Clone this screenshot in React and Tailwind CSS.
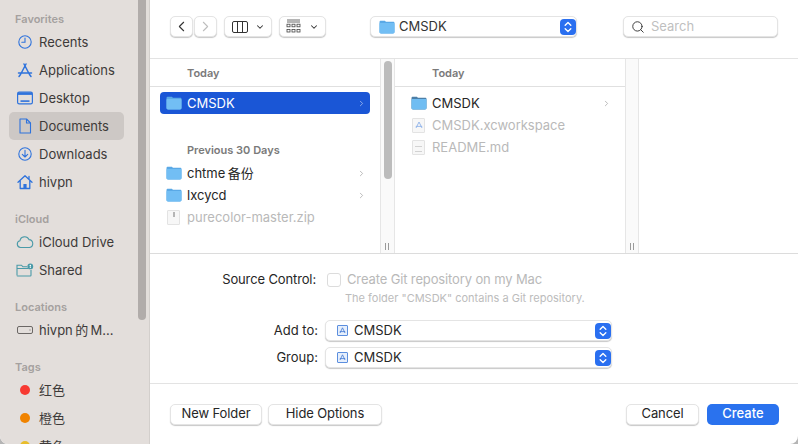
import { ChevronLeft, ChevronRight, ChevronDown, Search } from "lucide-react";

const font = "font-['Inter','Noto_Sans_CJK_SC',sans-serif]";

function Clock() {
  return (
    <svg width="16" height="16" viewBox="0 0 16 16" fill="none" stroke="#2f73dc" strokeWidth="1.1">
      <circle cx="8" cy="8" r="6.2" />
      <path d="M8 4v4.3H4.8" strokeLinecap="round" />
    </svg>
  );
}

function AppsIcon() {
  return (
    <svg width="18" height="18" viewBox="0 0 18 18" fill="none" stroke="#2f73dc" strokeWidth="1.5" strokeLinecap="round">
      <path d="M8 3l5.5 10.5M10 3L4.5 13.5M2.5 12h13M3 15.5l1.5-2M15 15.5l-1.5-2" />
    </svg>
  );
}

function DesktopIcon() {
  return (
    <svg width="16" height="14" viewBox="0 0 16 14" fill="none">
      <rect x="0.6" y="1.1" width="14.8" height="11.8" rx="1.6" stroke="#2f73dc" strokeWidth="1.2" />
      <rect x="1" y="1.5" width="14" height="2.4" fill="#2f73dc" />
      <rect x="3.5" y="9.3" width="9" height="1.6" fill="#2f73dc" />
    </svg>
  );
}

function DocIcon() {
  return (
    <svg width="14" height="16" viewBox="0 0 14 16" fill="none" stroke="#2f73dc" strokeWidth="1.1" strokeLinejoin="round">
      <path d="M2 1h6.5L12.5 5v10H2z" />
      <path d="M8.5 1v4h4" />
    </svg>
  );
}

function DownloadIcon() {
  return (
    <svg width="16" height="16" viewBox="0 0 16 16" fill="none" stroke="#2f73dc" strokeWidth="1.1" strokeLinecap="round" strokeLinejoin="round">
      <circle cx="8" cy="8" r="6.2" />
      <path d="M8 4.3v6.6M5.3 8.3L8 11l2.7-2.7" />
    </svg>
  );
}

function HomeIcon() {
  return (
    <svg width="16" height="16" viewBox="0 0 16 16" fill="none" stroke="#2f73dc" strokeWidth="1.3" strokeLinejoin="round" strokeLinecap="round">
      <path d="M1 8.2L8 1.8l7 6.4M3.2 6.8V14.5h9.6V6.8M12 2.5v2.5" />
      <path d="M6.4 14.5V10h3.2v4.5" fill="#2f73dc" stroke="none" />
    </svg>
  );
}

function CloudIcon() {
  return (
    <svg width="18" height="14" viewBox="0 0 18 14" fill="none" stroke="#4a9aa8" strokeWidth="1.1">
      <path d="M4.5 12.5a3.4 3.4 0 0 1-.6-6.7A4.8 4.8 0 0 1 13 4.6a4 4 0 0 1 .6 7.9z" />
    </svg>
  );
}

function SharedIcon() {
  return (
    <svg width="18" height="14" viewBox="0 0 18 14" fill="none" stroke="#4a9aa8" strokeWidth="1.1">
      <path d="M1 12V2.2h4.5l1.4 1.6H11M1 5.5h11M15 7v5.2a.8.8 0 0 1-.8.8H1.8a.8.8 0 0 1-.8-.8" />
      <circle cx="14.3" cy="3.4" r="2.9" fill="#4a9aa8" stroke="none" />
      <circle cx="14.3" cy="2.6" r="0.8" fill="#fff" stroke="none" />
      <path d="M14.3 3.6v1.4" stroke="#fff" strokeWidth="1" />
    </svg>
  );
}

function DriveIcon() {
  return (
    <svg width="16" height="8" viewBox="0 0 16 8" fill="none" stroke="#6b6765" strokeWidth="1">
      <rect x="0.5" y="0.5" width="15" height="7" rx="1.5" />
      <path d="M12.5 4h1" />
    </svg>
  );
}

function Folder({ dark }) {
  return (
    <svg width="16" height="14" viewBox="0 0 16 14" className="shrink-0">
      <path d="M0.5 2.2C0.5 1.3 1.1.8 2 .8h3.4c.7 0 1 .6 1.6 1h7c1 0 1.5.5 1.5 1.4V12c0 .9-.6 1.4-1.5 1.4H2c-.9 0-1.5-.5-1.5-1.4z" fill={dark ? "#4c7fa8" : "#5aa9e6"} />
      <path d="M.5 4c0-.6.4-1 1-1h13c.6 0 1 .4 1 1v8c0 .9-.6 1.4-1.5 1.4H2c-.9 0-1.5-.5-1.5-1.4z" fill={dark ? "#70bdf2" : "#72bef4"} />
    </svg>
  );
}

function XcodeMini() {
  return (
    <span className="flex h-[11px] w-[11px] items-center justify-center rounded-[1px] border border-[#5b8ede] bg-[#e6effc]">
      <svg width="7" height="7" viewBox="0 0 7 7" fill="none" stroke="#3f76d2" strokeWidth="0.8">
        <path d="M3.5.8L6 6M3.5.8L1 6M.8 4.6h5.4" />
      </svg>
    </span>
  );
}

function Stepper() {
  return (
    <span className="flex h-[16px] w-[16px] items-center justify-center rounded-[4px] bg-[#2a6ff0]">
      <svg width="8" height="12" viewBox="0 0 8 12" fill="none" stroke="#fff" strokeWidth="1.4" strokeLinecap="round" strokeLinejoin="round">
        <path d="M1.2 4.2L4 1.6l2.8 2.6M1.2 7.8L4 10.4l2.8-2.6" />
      </svg>
    </span>
  );
}

function SideRow({ icon, label, active }) {
  return (
    <div className={`mx-[9px] flex h-[28px] w-[115px] items-center rounded-[5px] ${active ? "bg-[#cdc8c5]" : ""}`}>
      <span className="flex w-[30px] shrink-0 items-center justify-center pl-[1px]">{icon}</span>
      <span className="text-[13px] leading-[28px] whitespace-nowrap text-[#3d3a39]">{label}</span>
    </div>
  );
}

function SideHead({ children, className }) {
  return <div className={`pl-[15px] text-[11px] leading-[14px] font-semibold text-[#a5a19f] ${className}`}>{children}</div>;
}

function Dot({ color }) {
  return <span className={`h-[10px] w-[10px] rounded-full ${color}`} />;
}

function Sidebar() {
  return (
    <aside className="relative h-[444px] w-[150px] shrink-0 overflow-hidden border-r border-[#d3cfcc] bg-[#e3dedb] pt-[12px]">
      <SideHead>Favorites</SideHead>
      <div className="mt-[2px]">
        <SideRow icon={<Clock />} label="Recents" />
        <SideRow icon={<AppsIcon />} label="Applications" />
        <SideRow icon={<DesktopIcon />} label="Desktop" />
        <SideRow icon={<DocIcon />} label="Documents" active />
        <SideRow icon={<DownloadIcon />} label="Downloads" />
        <SideRow icon={<HomeIcon />} label="hivpn" />
      </div>
      <SideHead className="mt-[16px]">iCloud</SideHead>
      <div className="mt-[2px]">
        <SideRow icon={<CloudIcon />} label="iCloud Drive" />
        <SideRow icon={<SharedIcon />} label="Shared" />
      </div>
      <SideHead className="mt-[16px]">Locations</SideHead>
      <div className="mt-[2px]">
        <SideRow icon={<DriveIcon />} label={"hivpn\u2009的\u2009M..."} />
      </div>
      <SideHead className="mt-[16px]">Tags</SideHead>
      <div className="mt-[2px]">
        <SideRow icon={<Dot color="bg-[#f73a32]" />} label="红色" />
        <SideRow icon={<Dot color="bg-[#f08300]" />} label="橙色" />
        <SideRow icon={<Dot color="bg-[#e8bd2c]" />} label="黄色" />
      </div>
      {/* scrollbar thumb */}
      <div className="absolute top-0 left-[138px] h-[320px] w-[8px] rounded-b-[4px] bg-[#b1acaa]" />
    </aside>
  );
}

const btn = "flex items-center justify-center rounded-[5px] border border-[#e4e4e4] bg-white shadow-[0_1px_1px_rgba(0,0,0,0.22)]";

function ViewColumnsIcon() {
  return (
    <svg width="16" height="12" viewBox="0 0 16 12" fill="none" stroke="#333" strokeWidth="1">
      <rect x="0.5" y="0.5" width="15" height="11" rx="1.5" />
      <path d="M5.5.5v11M10.5.5v11" />
    </svg>
  );
}

function GridIcon() {
  return (
    <svg width="15" height="15" viewBox="0 0 15 15" fill="none" stroke="#444" strokeWidth="0.8">
      <path d="M1 1h13M1 3h13" />
      <rect x="1" y="5.2" width="3" height="2.6" />
      <rect x="6" y="5.2" width="3" height="2.6" />
      <rect x="11" y="5.2" width="3" height="2.6" />
      <rect x="1" y="10.4" width="3" height="2.6" />
      <rect x="6" y="10.4" width="3" height="2.6" />
      <rect x="11" y="10.4" width="3" height="2.6" />
    </svg>
  );
}

function Toolbar() {
  return (
    <div className="flex h-[59px] shrink-0 items-start border-b border-[#e3e3e3] pt-[16px] pr-[19px] pl-[20px]">
      <div className={`${btn} h-[21px] w-[23px]`}>
        <ChevronLeft size={17} strokeWidth={1.5} className="text-[#333]" />
      </div>
      <div className={`${btn} ml-[1px] h-[21px] w-[23px]`}>
        <ChevronRight size={17} strokeWidth={1.5} className="text-[#bdbdbd]" />
      </div>
      <div className={`${btn} ml-[7px] h-[21px] w-[48px] gap-[7px]`}>
        <ViewColumnsIcon />
        <ChevronDown size={10} strokeWidth={2.5} className="text-[#333]" />
      </div>
      <div className={`${btn} ml-[7px] h-[21px] w-[47px] gap-[8px]`}>
        <GridIcon />
        <ChevronDown size={10} strokeWidth={2.5} className="text-[#333]" />
      </div>
      <div className={`${btn} ml-[44px] h-[21px] w-[207px] justify-start! pl-[8px]`}>
        <Folder />
        <span className="ml-[4px] flex-1 text-[13px] text-[#333]">CMSDK</span>
        <Stepper />
      </div>
      <div className={`${btn} ml-[46px] h-[21px] w-[155px] justify-start! pl-[7px]`}>
        <Search size={14} strokeWidth={1.6} className="text-[#333]" />
        <span className="ml-[6px] text-[13px] text-[#bfbfbf]">Search</span>
      </div>
    </div>
  );
}

function ColHead({ title, className }) {
  return <div className={`pl-[37px] text-[11px] leading-[14px] font-semibold text-[#7a7a7a] ${className}`}>{title}</div>;
}

function FileRow({ icon, name, chevron, active, dim }) {
  return (
    <div className={`mx-[10px] flex h-[22px] items-center rounded-[4px] ${active ? "bg-[#1a56d6]" : ""}`}>
      <span className="flex w-[27px] shrink-0 items-center justify-center">{icon}</span>
      <span className={`flex-1 text-[13px] leading-[22px] whitespace-nowrap ${active ? "text-white" : dim ? "text-[#b9b9b9]" : "text-[#262626]"}`}>{name}</span>
      {chevron && <ChevronRight size={9} strokeWidth={2} className={`mr-[4px] ${active ? "text-[#a9c2f0]" : "text-[#a5a5a5]"}`} />}
    </div>
  );
}

function DocFile({ zip, xc }) {
  return (
    <span className="relative flex h-[15px] w-[13px] items-center justify-center rounded-[1px] border border-[#e3e3e3] bg-[#f7f7f7]">
      {zip && <span className="absolute top-[1px] h-[5px] w-[2px] bg-[#b5b5b5]" />}
      {xc && (
        <svg width="8" height="8" viewBox="0 0 8 8" fill="none" stroke="#8fb2ea" strokeWidth="0.9">
          <path d="M4 1l3 6M4 1L1 7M.8 5.4h6.4" />
        </svg>
      )}
      {!zip && !xc && <span className="mt-[3px] h-[6px] w-[7px] border-y border-[#d2d2d2]" />}
    </span>
  );
}

function Splitter({ thumb, className }) {
  return (
    <div className={`relative shrink-0 border-x border-[#e6e6e6] bg-[#fafafa] ${className}`}>
      {thumb && <div className="absolute top-[2px] left-[3px] h-[118px] w-[8px] rounded-[4px] bg-[#bcbcbc]" />}
      <span className="absolute bottom-[3px] left-[4px] h-[7px] w-[4px] border-x border-[#9b9b9b]" />
    </div>
  );
}

function Columns() {
  return (
    <div className="flex h-[195px] shrink-0 border-b border-[#dcdcdc]">
      <div className="w-[230px] shrink-0">
        <div className="flex h-[28px] items-center border-b border-[#e0e0e0]">
          <ColHead title="Today" />
        </div>
        <div className="mt-[5px]">
          <FileRow icon={<Folder />} name="CMSDK" chevron active />
        </div>
        <ColHead title="Previous 30 Days" className="mt-[29px] mb-[5px]" />
        <FileRow icon={<Folder />} name={"chtme\u2009备份"} chevron />
        <FileRow icon={<Folder />} name="lxcycd" chevron />
        <FileRow icon={<DocFile zip />} name="purecolor-master.zip" dim />
      </div>
      <Splitter thumb className="w-[15px]" />
      <div className="w-[230px] shrink-0">
        <div className="flex h-[28px] items-center border-b border-[#e0e0e0]">
          <ColHead title="Today" />
        </div>
        <div className="mt-[5px]">
          <FileRow icon={<Folder dark />} name="CMSDK" chevron />
          <FileRow icon={<DocFile xc />} name="CMSDK.xcworkspace" dim />
          <FileRow icon={<DocFile />} name="README.md" dim />
        </div>
      </div>
      <Splitter className="w-[14px]" />
      <div className="flex-1" />
    </div>
  );
}

function SelectRow({ label }) {
  return (
    <div className="flex h-[27px] items-center">
      <span className="w-[168px] text-right text-[13px] text-[#262626]">{label}</span>
      <div className={`${btn} ml-[7px] h-[21px] w-[287px] justify-start! pl-[11px]`}>
        <XcodeMini />
        <span className="ml-[6px] flex-1 text-[13px] text-[#262626]">CMSDK</span>
        <Stepper />
      </div>
    </div>
  );
}

function Options() {
  return (
    <div className="h-[130px] shrink-0 border-b border-[#e3e3e3] pt-[17px]">
      <div className="flex h-[18px] items-center">
        <span className="w-[166px] text-right text-[13px] tracking-[-0.13px] text-[#262626]">Source Control:</span>
        <span className="ml-[11px] h-[14px] w-[14px] rounded-[3px] border border-[#dcdcdc] bg-white" />
        <span className="ml-[6px] text-[13px] tracking-[-0.13px] text-[#b9b9b9]">Create Git repository on my Mac</span>
      </div>
      <div className="mt-[1px] pl-[195px] text-[11px] leading-[16px] text-[#bcbcbc]">The folder "CMSDK" contains a Git repository.</div>
      <div className="mt-[11px]">
        <SelectRow label="Add to:" />
        <SelectRow label="Group:" />
      </div>
    </div>
  );
}

function Footer() {
  return (
    <div className="flex flex-1 items-center justify-between pr-[19px] pl-[20px]">
      <div className="flex gap-[6px]">
        <div className={`${btn} h-[21px] w-[92px] text-[13px] tracking-[-0.1px] text-[#262626]`}>New Folder</div>
        <div className={`${btn} h-[21px] w-[114px] text-[13px] tracking-[-0.1px] text-[#262626]`}>Hide Options</div>
      </div>
      <div className="flex gap-[8px]">
        <div className={`${btn} h-[21px] w-[73px] text-[13px] tracking-[-0.1px] text-[#262626]`}>Cancel</div>
        <div className="flex h-[21px] w-[72px] items-center justify-center rounded-[5px] bg-[#2a72ee] text-[13px] font-medium text-white">Create</div>
      </div>
    </div>
  );
}

export default function App() {
  return (
    <div className="h-[444px] w-[798px] bg-[#b5b5b5]">
      <div className={`flex h-[444px] w-[798px] overflow-hidden rounded-b-[8px] bg-white ${font}`}>
        <Sidebar />
        <main className="flex min-w-0 flex-1 flex-col">
          <Toolbar />
          <Columns />
          <Options />
          <Footer />
        </main>
      </div>
    </div>
  );
}
